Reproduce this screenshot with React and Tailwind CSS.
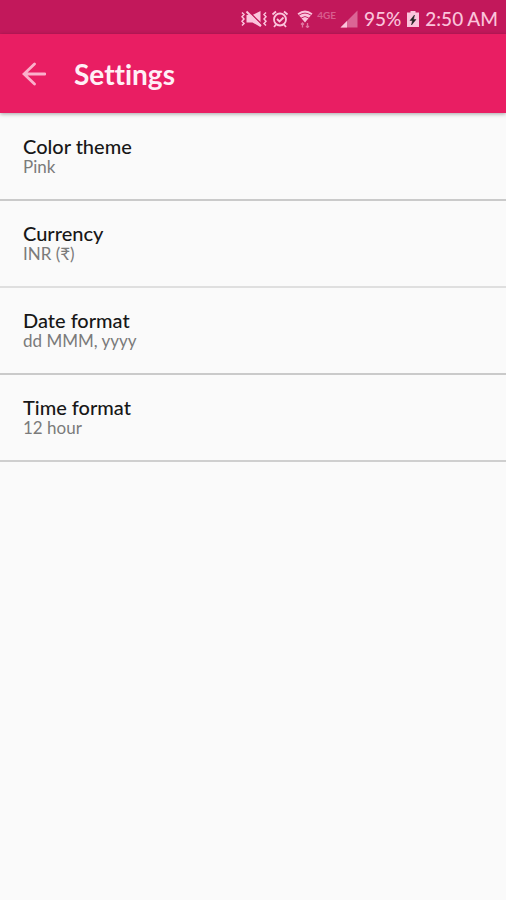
import React from 'react';

const settings = [
  { id: 'theme', title: 'Color theme', value: 'Pink', line: 'border-[#cacaca]' },
  { id: 'currency', title: 'Currency', value: 'INR (₹)', line: 'border-[#dfdfdf]' },
  { id: 'date', title: 'Date format', value: 'dd MMM, yyyy', line: 'border-[#cacaca]' },
  { id: 'time', title: 'Time format', value: '12 hour', line: 'border-[#cfcfcf]' },
];

const VibrateIcon = () => (
  <svg className="w-[26px] h-[18px]" viewBox="0 0 26 18" fill="none" stroke="currentColor" strokeWidth="1.5">
    <path d="M1 2.5l2 2-2 2.3 2 2.2-2 2.3 2 2.2-2 2M25 2.5l-2 2 2 2.3-2 2.2 2 2.3-2 2.2 2 2" />
    <path d="M5.5 5h6l8-4v16l-8-4.5h-6z" fill="currentColor" stroke="none" />
    <path d="M7.5 1.5l13 12.5" stroke="#c2185b" strokeWidth="1.6" />
    <path d="M5.5 1.5l14.5 14.5" strokeWidth="2" />
  </svg>
);

const AlarmIcon = () => (
  <svg className="w-[18px] h-[18px]" viewBox="0 0 18 18" fill="none" stroke="currentColor" strokeWidth="1.8">
    <circle cx="9" cy="9.5" r="6" />
    <path d="M1.5 4.5l3.5-3M16.5 4.5l-3.5-3M5 14.5l-2 2.5M13 14.5l2 2.5M6 9l2.5 2.5L12.5 7.5" />
  </svg>
);

const WifiIcon = () => (
  <svg className="w-4 h-[18px]" viewBox="0 0 16 18" fill="none" stroke="currentColor">
    <path d="M0.5 3.5Q8 -2.5 15.5 3.5L8 12.5z" fill="currentColor" stroke="none" />
    <path d="M2 5.2Q8 1 14 5.2M4.2 8Q8 5 11.8 8" stroke="#c2185b" strokeWidth="0.9" />
    <path d="M5.5 17.5v-4.5M4 14.5l1.5-1.5L7 14.5M10.5 13v4.5M9 16l1.5 1.5 1.5-1.5" strokeWidth="1.3" opacity="0.55" />
  </svg>
);

const SignalIcon = () => (
  <svg className="w-[18px] h-[18px]" viewBox="0 0 18 18" fill="currentColor">
    <path d="M17.5 0.5v17H0.5z" opacity="0.45" />
    <path d="M7 11v6.5H0.5z" />
  </svg>
);

const BatteryIcon = () => (
  <svg className="w-3 h-[18px]" viewBox="0 0 12 18">
    <path d="M3.5 1h5v1.5H12V17H0V2.5h3.5z" fill="currentColor" />
    <path d="M7.5 5L3 10.5h2.5L4.5 15 9 9.5H6.5z" fill="#222222" stroke="#222222" strokeWidth="0.5" />
  </svg>
);

const StatusBar = () => (
  <div className="flex h-[34px] items-center justify-end bg-[#c2185b] pr-2 pt-1 text-[#fbc4dc]">
    <VibrateIcon />
    <span className="ml-1"><AlarmIcon /></span>
    <span className="ml-2"><WifiIcon /></span>
    <span className="mb-2 ml-1 text-[10px] leading-3 font-bold opacity-40">4GE</span>
    <span className="ml-1"><SignalIcon /></span>
    <span className="ml-1.5 text-[19px] leading-6 font-medium">95%</span>
    <span className="ml-1.5"><BatteryIcon /></span>
    <span className="ml-1.5 text-[19px] leading-6 font-medium">2:50 AM</span>
  </div>
);

const SettingRow = ({ setting }) => (
  <li className={`border-b-2 ${setting.line}`}>
    <button type="button" className="block w-full px-[23px] pt-[22px] pb-[22px] text-left">
      <span className="block text-xl leading-[21px] font-medium text-[#171717]">{setting.title}</span>
      <span className="block text-[17px] leading-5 text-[#7b7b7b]">{setting.value}</span>
    </button>
  </li>
);

const App = () => {
  return (
    <div className="min-h-screen bg-[#fafafa] font-[Lato,'Noto_Sans',sans-serif]">
      <StatusBar />
      <header className="relative flex h-[79px] items-center bg-[#e91e63] pl-[22px] shadow-[0_1px_4px_rgba(0,0,0,0.35)]">
        <button type="button" aria-label="Back" className="text-[#fbb0cb]">
          <svg className="h-6 w-6" viewBox="0 0 24 24" fill="none" stroke="currentColor" strokeWidth="2.8" strokeLinecap="round">
            <path d="M12.5 2L2 12l10.5 10M2.5 12H23" />
          </svg>
        </button>
        <h1 className="ml-7 text-[28px] leading-8 font-bold text-[#fff0f6] [font-variant-ligatures:none]">Settings</h1>
      </header>
      <ul className="pt-px">
        {settings.map((setting) => (
          <SettingRow key={setting.id} setting={setting} />
        ))}
      </ul>
    </div>
  );
};

export default App;
